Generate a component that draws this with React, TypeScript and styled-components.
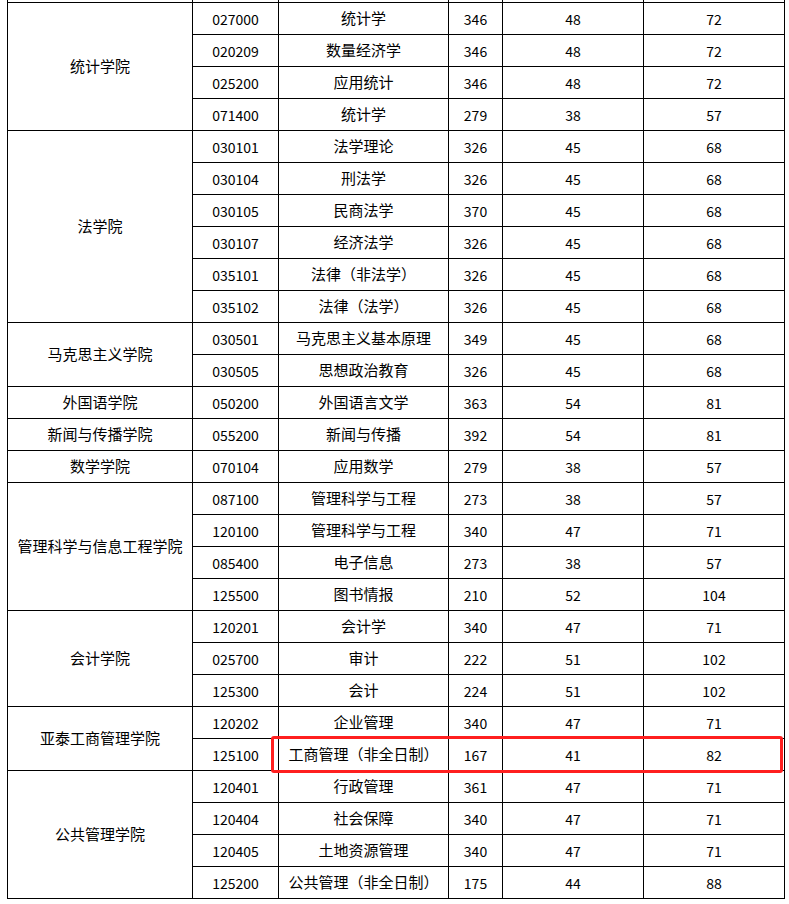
import React from 'react';
import styled, { createGlobalStyle } from 'styled-components';

type Major = { code: string; name: string; total: number; single: number; multi: number };
type School = { school: string; majors: Major[] };

const m = (code: string, name: string, total: number, single: number, multi: number): Major => ({
    code,
    name,
    total,
    single,
    multi,
});

const data: School[] = [
    {
        school: '统计学院',
        majors: [
            m('027000', '统计学', 346, 48, 72),
            m('020209', '数量经济学', 346, 48, 72),
            m('025200', '应用统计', 346, 48, 72),
            m('071400', '统计学', 279, 38, 57),
        ],
    },
    {
        school: '法学院',
        majors: [
            m('030101', '法学理论', 326, 45, 68),
            m('030104', '刑法学', 326, 45, 68),
            m('030105', '民商法学', 370, 45, 68),
            m('030107', '经济法学', 326, 45, 68),
            m('035101', '法律（非法学）', 326, 45, 68),
            m('035102', '法律（法学）', 326, 45, 68),
        ],
    },
    {
        school: '马克思主义学院',
        majors: [
            m('030501', '马克思主义基本原理', 349, 45, 68),
            m('030505', '思想政治教育', 326, 45, 68),
        ],
    },
    { school: '外国语学院', majors: [m('050200', '外国语言文学', 363, 54, 81)] },
    { school: '新闻与传播学院', majors: [m('055200', '新闻与传播', 392, 54, 81)] },
    { school: '数学学院', majors: [m('070104', '应用数学', 279, 38, 57)] },
    {
        school: '管理科学与信息工程学院',
        majors: [
            m('087100', '管理科学与工程', 273, 38, 57),
            m('120100', '管理科学与工程', 340, 47, 71),
            m('085400', '电子信息', 273, 38, 57),
            m('125500', '图书情报', 210, 52, 104),
        ],
    },
    {
        school: '会计学院',
        majors: [
            m('120201', '会计学', 340, 47, 71),
            m('025700', '审计', 222, 51, 102),
            m('125300', '会计', 224, 51, 102),
        ],
    },
    {
        school: '亚泰工商管理学院',
        majors: [
            m('120202', '企业管理', 340, 47, 71),
            m('125100', '工商管理（非全日制）', 167, 41, 82),
        ],
    },
    {
        school: '公共管理学院',
        majors: [
            m('120401', '行政管理', 361, 47, 71),
            m('120404', '社会保障', 340, 47, 71),
            m('120405', '土地资源管理', 340, 47, 71),
            m('125200', '公共管理（非全日制）', 175, 44, 88),
        ],
    },
];

const colWidths = [185, 86, 170, 54, 141, 141];

export default function App() {
    return (
        <>
            <GlobalStyle />
            <Page>
                <Table>
                    <colgroup>
                        {colWidths.map((w, i) => (
                            <col key={i} style={{ width: w }} />
                        ))}
                    </colgroup>
                    <tbody>
                        {/* tail of the row cut off at the top of the screenshot */}
                        <StubRow>
                            {colWidths.map((_, i) => (
                                <StubCell key={i} />
                            ))}
                        </StubRow>
                        {data.map((s) =>
                            s.majors.map((mj, i) => (
                                <Row key={s.school + mj.code}>
                                    {i === 0 && <TextCell rowSpan={s.majors.length}>{s.school}</TextCell>}
                                    <NumCell>{mj.code}</NumCell>
                                    <TextCell>{mj.name}</TextCell>
                                    <NumCell>{mj.total}</NumCell>
                                    <NumCell>{mj.single}</NumCell>
                                    <NumCell>{mj.multi}</NumCell>
                                </Row>
                            ))
                        )}
                    </tbody>
                </Table>
                <Highlight />
            </Page>
        </>
    );
}

const GlobalStyle = createGlobalStyle`
    html, body {
        margin: 0;
        padding: 0;
        background: #ffffff;
    }
`;

const Page = styled.div`
    position: relative;
    padding-left: 7px;
    width: 789px;
    box-sizing: border-box;
`;

const Table = styled.table`
    border-collapse: collapse;
    table-layout: fixed;
    width: 777px;
    color: #000;
`;

const StubRow = styled.tr`
    height: 2px;
`;

const StubCell = styled.td`
    padding: 0;
    height: 1px;
    border-left: 1px solid #000;
    border-right: 1px solid #000;
    line-height: 0;
    font-size: 0;
`;

const Row = styled.tr`
    height: 32px;
`;

const Cell = styled.td`
    border: 1px solid #000;
    padding: 0;
    height: 30px;
    text-align: center;
    vertical-align: middle;
    white-space: nowrap;
    line-height: 18px;
`;

const TextCell = styled(Cell)`
    font-family: 'Noto Sans CJK SC', 'Noto Sans', sans-serif;
    font-size: 15px;
`;

const NumCell = styled(Cell)`
    font-family: 'Noto Sans CJK SC', 'Liberation Sans', sans-serif;
    font-size: 14px;
    padding-top: 1px;
`;

const Highlight = styled.div`
    position: absolute;
    left: 271px;
    top: 736px;
    width: 512px;
    height: 37px;
    box-sizing: border-box;
    border: 3px solid #ff1f1f;
    border-radius: 3px;
    pointer-events: none;
`;
